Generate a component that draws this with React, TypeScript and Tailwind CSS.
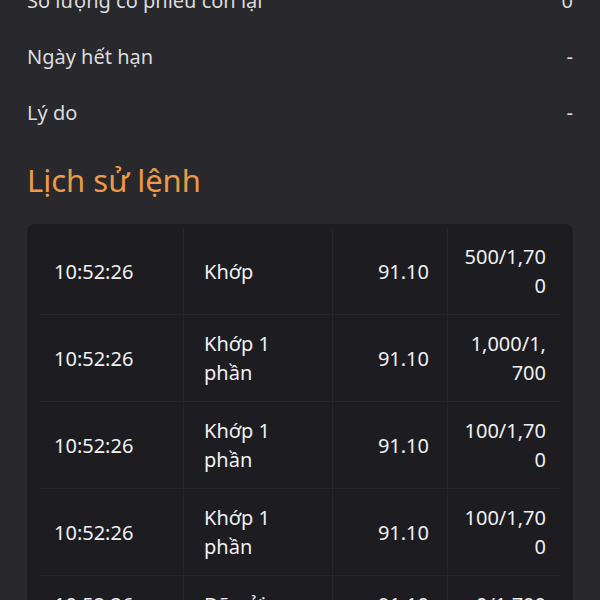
import React from "react";

interface InfoRow {
  label: string;
  value: string;
}

interface HistoryRow {
  time: string;
  status: string;
  price: string;
  qty: string;
}

const infoRows: InfoRow[] = [
  { label: "Số lượng cổ phiếu còn lại", value: "0" },
  { label: "Ngày hết hạn", value: "-" },
  { label: "Lý do", value: "-" },
];

const history: HistoryRow[] = [
  { time: "10:52:26", status: "Khớp", price: "91.10", qty: "500/1,700" },
  { time: "10:52:26", status: "Khớp 1 phần", price: "91.10", qty: "1,000/1,700" },
  { time: "10:52:26", status: "Khớp 1 phần", price: "91.10", qty: "100/1,700" },
  { time: "10:52:26", status: "Khớp 1 phần", price: "91.10", qty: "100/1,700" },
  { time: "10:52:26", status: "Đã gửi", price: "91.10", qty: "0/1,700" },
];

export default function App() {
  return (
    <div
      className="h-[600px] w-[600px] overflow-hidden bg-[#28282d] px-[27px] text-[20px]"
      style={{ fontFamily: '"Noto Sans", "Open Sans", sans-serif' }}
    >
      {/* Order details (tail) */}
      <div className="-mt-[27px]">
        {infoRows.map((row) => (
          <div key={row.label} className="flex h-14 items-center justify-between text-[#dcdcde]">
            <span>{row.label}</span>
            <span>{row.value}</span>
          </div>
        ))}
      </div>

      <h2 className="mt-[19px] text-[31px] leading-[40px] text-[#ec9a45]">Lịch sử lệnh</h2>

      {/* History table */}
      <div className="mt-6 rounded-lg bg-[#1d1d21] px-3 pt-1 text-[#f0f0f2]">
        {history.map((row, i) => (
          <div
            key={i}
            className={`grid grid-cols-[144px_149px_115px_113px] leading-[29px] ${
              i > 0 ? "border-t border-[#27272b]" : ""
            }`}
          >
            <div className="flex items-center py-[14px] pl-[15px]">{row.time}</div>
            <div className="flex items-center border-l border-[#27272b] py-[14px] pl-5 pr-5">
              {row.status}
            </div>
            <div className="flex items-center justify-end border-l border-[#27272b] py-[14px] pr-[18px]">
              {row.price}
            </div>
            <div className="flex items-center justify-end border-l border-[#27272b] py-[14px] pr-[14px]">
              <span className="w-[84px] break-all text-right">{row.qty}</span>
            </div>
          </div>
        ))}
      </div>
    </div>
  );
}
